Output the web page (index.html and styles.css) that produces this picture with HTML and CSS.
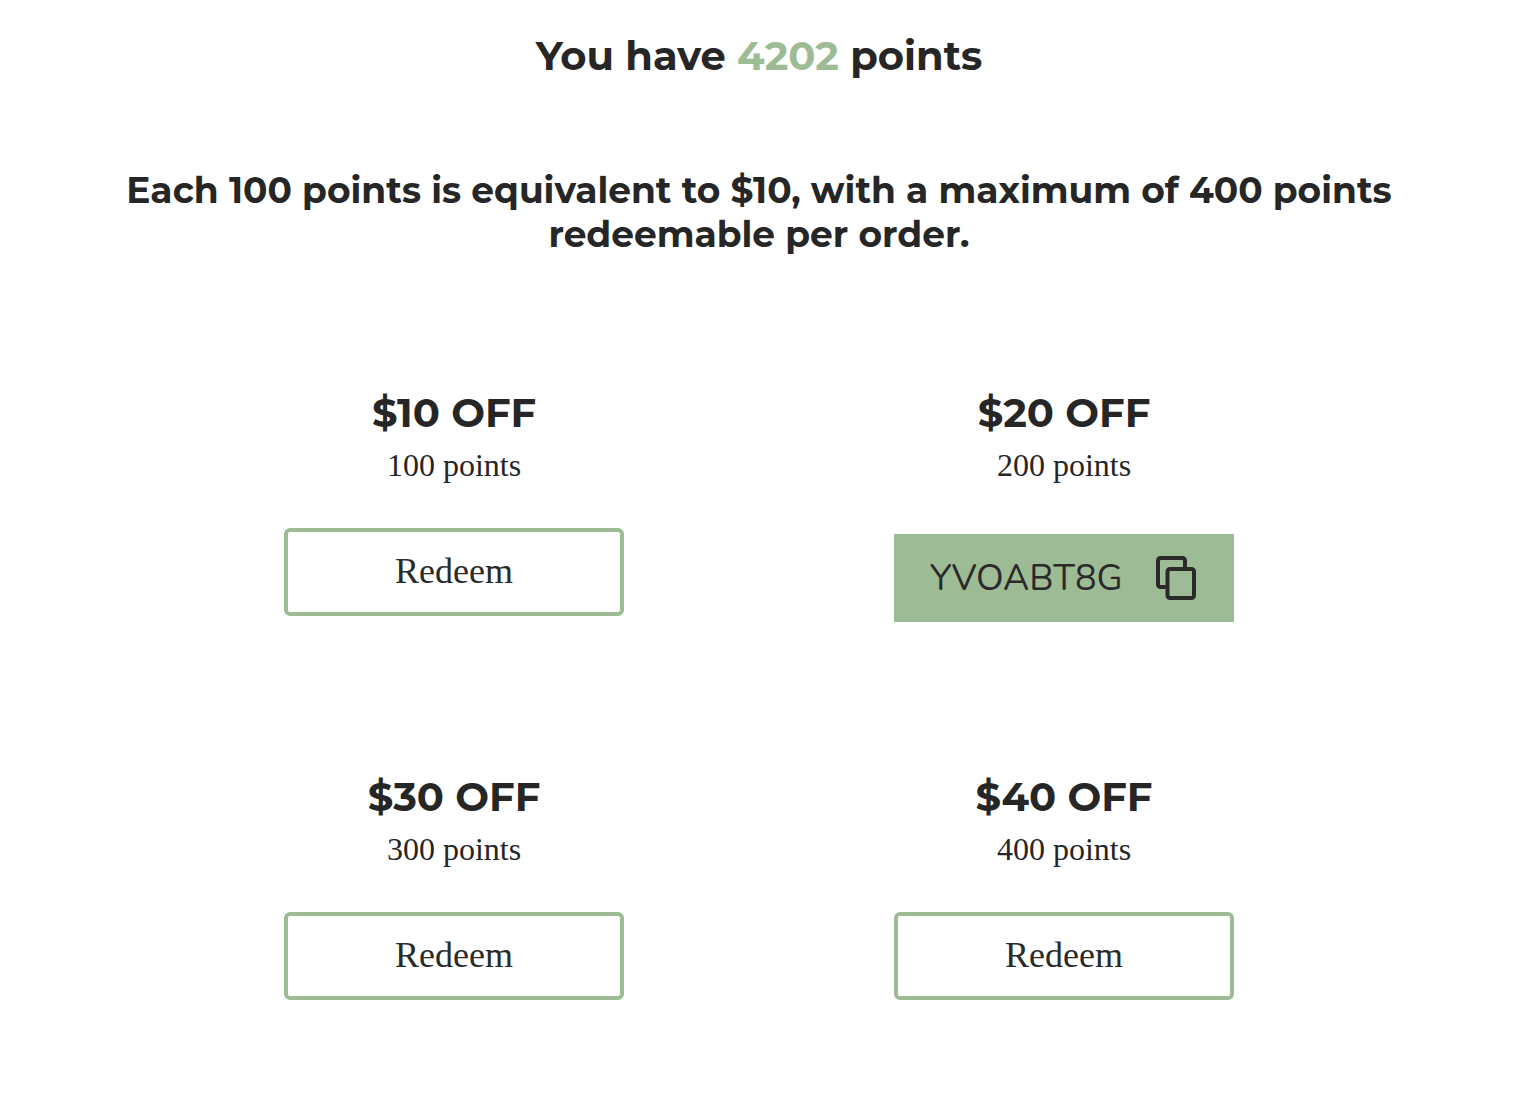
FILE: index.html
```
<!DOCTYPE html>
<html lang="en">
<head>
<meta charset="utf-8">
<meta name="viewport" content="width=device-width, initial-scale=1">
<title>Rewards</title>
<link rel="stylesheet" href="styles.css">
</head>
<body>
<main class="rewards">
  <h1 class="balance">You have <span class="balance-value">4202</span> points</h1>
  <h2 class="terms">Each 100 points is equivalent to $10, with a maximum of 400 points redeemable per order.</h2>
  <div class="offers">
    <section class="offer">
      <h3 class="offer-title">$10 OFF</h3>
      <p class="offer-cost">100 points</p>
      <button class="redeem" type="button">Redeem</button>
    </section>
    <section class="offer">
      <h3 class="offer-title">$20 OFF</h3>
      <p class="offer-cost">200 points</p>
      <button class="code" type="button">
        <span class="code-text">YVOABT8G</span>
        <svg class="code-icon" width="40" height="44" viewBox="0 0 40 44" fill="none" stroke="currentColor" stroke-width="4" aria-hidden="true">
          <path d="M11 31H4.500a2.500 2.500 0 0 1-2.500-2.500V4.500A2.500 2.500 0 0 1 4.500 2h22a2.500 2.500 0 0 1 2.500 2.500V13"/>
          <rect x="11.500" y="13" width="26.500" height="29" rx="2.500"/>
        </svg>
      </button>
    </section>
    <section class="offer">
      <h3 class="offer-title">$30 OFF</h3>
      <p class="offer-cost">300 points</p>
      <button class="redeem" type="button">Redeem</button>
    </section>
    <section class="offer">
      <h3 class="offer-title">$40 OFF</h3>
      <p class="offer-cost">400 points</p>
      <button class="redeem" type="button">Redeem</button>
    </section>
  </div>
</main>
</body>
</html>
```
FILE: styles.css
```
* {
  box-sizing: border-box;
}

body {
  margin: 0;
  background: #fff;
  color: #262626;
  font-family: "Liberation Serif", "Times New Roman", serif;
}

.rewards {
  padding: 32px 94px 104px 80px;
  text-align: center;
}

.balance,
.terms,
.offer-title {
  margin: 0;
  font-family: Montserrat, Inter, sans-serif;
  font-weight: 700;
}

.balance {
  font-size: 40px;
  line-height: 48px;
}

.balance-value {
  color: #9dbb95;
}

.terms {
  margin-top: 88px;
  font-size: 36px;
  line-height: 44px;
}

.offers {
  display: grid;
  grid-template-columns: repeat(2, minmax(0, 340px));
  justify-content: center;
  align-items: start;
  row-gap: 151px;
  column-gap: min(270px, 20vw);
  margin-top: 133px;
}

.offer {
  display: flex;
  flex-direction: column;
}

.offer-title {
  font-size: 40px;
  line-height: 48px;
}

.offer-cost {
  margin: 8px 0 0;
  font-size: 32px;
  line-height: 40px;
}

.redeem,
.code {
  min-height: 88px;
  color: #2a2a2a;
  font-size: 36px;
  cursor: pointer;
}

.redeem {
  margin-top: 43px;
  padding: 0 32px 2px;
  border: 4px solid #9dbb95;
  border-radius: 6px;
  background: #fff;
  font-family: inherit;
}

.code {
  display: flex;
  align-items: center;
  justify-content: space-between;
  margin-top: 49px;
  padding: 0 38px 0 36px;
  border: 0;
  background: #9dbb95;
  font-family: Nunito, Lato, sans-serif;
}
```
